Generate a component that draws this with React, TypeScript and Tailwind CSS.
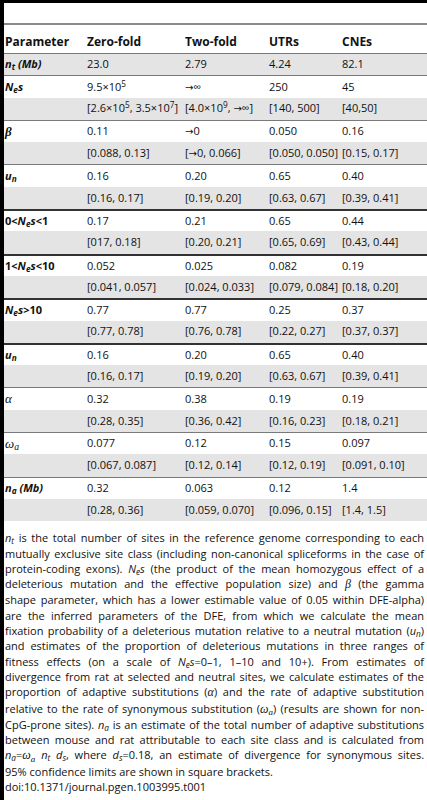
import React from "react";

const SANS = "font-['Open_Sans',sans-serif]";
const SERIF = "font-['Liberation_Serif',serif]";

const Ne = ({ bold = false }: { bold?: boolean }) => (
  <span className={bold ? "italic font-bold" : "italic"}>
    N<sub>e</sub>s
  </span>
);

type Row = {
  label: React.ReactNode;
  vals: React.ReactNode[];
  ci: React.ReactNode[] | null;
  heavy?: boolean;
};

const Sup = ({ b, e }: { b: string; e: string }) => (
  <>
    {b}×10<sup>{e}</sup>
  </>
);

const Arr = () => <span className="font-['DejaVu_Sans',sans-serif] text-[10px]">→</span>;

const rows: Row[] = [
  {
    label: (
      <span className="italic font-bold">
        n<sub>t</sub> (Mb)
      </span>
    ),
    vals: ["23.0", "2.79", "4.24", "82.1"],
    ci: null,
  },
  {
    label: <Ne bold />,
    vals: [
      <Sup b="9.5" e="5" />,
      <>
        <Arr />∞
      </>,
      "250",
      "45",
    ],
    ci: [
      <>
        [<Sup b="2.6" e="5" />, <Sup b="3.5" e="7" />]
      </>,
      <>
        [<Sup b="4.0" e="9" />, <Arr />∞]
      </>,
      "[140, 500]",
      "[40,50]",
    ],
  },
  {
    label: <span className={`${SERIF} italic font-bold text-[13px]`}>β</span>,
    vals: [
      "0.11",
      <>
        <Arr />0
      </>,
      "0.050",
      "0.16",
    ],
    ci: [
      "[0.088, 0.13]",
      <>
        [<Arr />0, 0.066]
      </>,
      "[0.050, 0.050]",
      "[0.15, 0.17]",
    ],
  },
  {
    label: (
      <span className="italic font-bold">
        u<sub>n</sub>
      </span>
    ),
    vals: ["0.16", "0.20", "0.65", "0.40"],
    ci: ["[0.16, 0.17]", "[0.19, 0.20]", "[0.63, 0.67]", "[0.39, 0.41]"],
  },
  {
    label: (
      <span className="font-bold">
        0&lt;<Ne />&lt;1
      </span>
    ),
    vals: ["0.17", "0.21", "0.65", "0.44"],
    ci: ["[017, 0.18]", "[0.20, 0.21]", "[0.65, 0.69]", "[0.43, 0.44]"],
    heavy: true,
  },
  {
    label: (
      <span className="font-bold">
        1&lt;<Ne />&lt;10
      </span>
    ),
    vals: ["0.052", "0.025", "0.082", "0.19"],
    ci: ["[0.041, 0.057]", "[0.024, 0.033]", "[0.079, 0.084]", "[0.18, 0.20]"],
    heavy: true,
  },
  {
    label: (
      <span className="font-bold">
        <Ne />
        &gt;10
      </span>
    ),
    vals: ["0.77", "0.77", "0.25", "0.37"],
    ci: ["[0.77, 0.78]", "[0.76, 0.78]", "[0.22, 0.27]", "[0.37, 0.37]"],
    heavy: true,
  },
  {
    label: (
      <span className="italic font-bold">
        u<sub>n</sub>
      </span>
    ),
    vals: ["0.16", "0.20", "0.65", "0.40"],
    ci: ["[0.16, 0.17]", "[0.19, 0.20]", "[0.63, 0.67]", "[0.39, 0.41]"],
    heavy: true,
  },
  {
    label: <span className={`${SERIF} italic text-[13px]`}>α</span>,
    vals: ["0.32", "0.38", "0.19", "0.19"],
    ci: ["[0.28, 0.35]", "[0.36, 0.42]", "[0.16, 0.23]", "[0.18, 0.21]"],
  },
  {
    label: (
      <span className={`${SERIF} italic text-[13px]`}>
        ω<sub>a</sub>
      </span>
    ),
    vals: ["0.077", "0.12", "0.15", "0.097"],
    ci: ["[0.067, 0.087]", "[0.12, 0.14]", "[0.12, 0.19]", "[0.091, 0.10]"],
  },
  {
    label: (
      <span className="italic font-bold">
        n<sub>a</sub> (Mb)
      </span>
    ),
    vals: ["0.32", "0.063", "0.12", "1.4"],
    ci: ["[0.28, 0.36]", "[0.059, 0.070]", "[0.096, 0.15]", "[1.4, 1.5]"],
  },
];

const GRID = "grid grid-cols-[82px_98px_84px_73px_1fr] items-center pl-[1px]";

const Line = ({ children, last = false }: { children: React.ReactNode; last?: boolean }) => (
  <div className={last ? "text-left" : "text-justify [text-align-last:justify]"}>{children}</div>
);

const I = ({ children }: { children: React.ReactNode }) => <span className="italic">{children}</span>;
const G = ({ children }: { children: React.ReactNode }) => (
  <span className={`${SERIF} italic text-[12px]`}>{children}</span>
);

export default function App() {
  return (
    <div className={`${SANS} bg-white text-[#111] min-h-[800px] w-[427px] border-l-4 border-black overflow-hidden`}>
      <div className="h-[3px] bg-black -ml-1 w-[427px]" />
      <div className="h-[20px]" />
      {/* header */}
      <div className={`${GRID} border-t-2 border-[#8a8a8a] h-[30px] pt-[6px] text-[12px] font-bold`}>
        <div>Parameter</div>
        <div>Zero-fold</div>
        <div>Two-fold</div>
        <div>UTRs</div>
        <div>CNEs</div>
      </div>
      <div className="text-[11px]">
        {rows.map((r, i) => (
          <React.Fragment key={i}>
            <div
              className={`${GRID} h-[22.3px] ${
                r.heavy ? "border-t-2 border-[#333]" : "border-t border-[#7a7a7a]"
              } ${r.ci === null ? "bg-[#e4e4e4]" : ""}`}
            >
              <div>{r.label}</div>
              {r.vals.map((v, j) => (
                <div key={j} className="whitespace-nowrap">
                  {v}
                </div>
              ))}
            </div>
            {r.ci && (
              <div className={`${GRID} h-[22.3px] bg-[#e4e4e4]`}>
                <div />
                {r.ci.map((v, j) => (
                  <div key={j} className="whitespace-nowrap">
                    {v}
                  </div>
                ))}
              </div>
            )}
          </React.Fragment>
        ))}
      </div>
      <div className="pl-[1px] pr-[3px] pt-[9px] text-[11px] leading-[15.3px]">
        <Line>
          <I>
            n<sub>t</sub>
          </I>{" "}
          is the total number of sites in the reference genome corresponding to each
        </Line>
        <Line>mutually exclusive site class (including non-canonical spliceforms in the case of</Line>
        <Line>
          protein-coding exons). <Ne /> (the product of the mean homozygous effect of a
        </Line>
        <Line>
          deleterious mutation and the effective population size) and <G>β</G> (the gamma
        </Line>
        <Line>shape parameter, which has a lower estimable value of 0.05 within DFE-alpha)</Line>
        <Line>are the inferred parameters of the DFE, from which we calculate the mean</Line>
        <Line>
          fixation probability of a deleterious mutation relative to a neutral mutation (
          <I>
            u<sub>n</sub>
          </I>
          )
        </Line>
        <Line>and estimates of the proportion of deleterious mutations in three ranges of</Line>
        <Line>
          fitness effects (on a scale of <Ne />=0–1, 1–10 and 10+). From estimates of
        </Line>
        <Line>divergence from rat at selected and neutral sites, we calculate estimates of the</Line>
        <Line>
          proportion of adaptive substitutions (<G>α</G>) and the rate of adaptive substitution
        </Line>
        <Line>
          relative to the rate of synonymous substitution (
          <G>
            ω<sub>a</sub>
          </G>
          ) (results are shown for non-
        </Line>
        <Line>
          CpG-prone sites).{" "}
          <I>
            n<sub>a</sub>
          </I>{" "}
          is an estimate of the total number of adaptive substitutions
        </Line>
        <Line>between mouse and rat attributable to each site class and is calculated from</Line>
        <Line>
          <I>
            n<sub>a</sub>
          </I>
          =
          <G>
            ω<sub>a</sub>
          </G>{" "}
          <I>
            n<sub>t</sub>
          </I>{" "}
          <I>
            d<sub>s</sub>
          </I>
          , where{" "}
          <I>
            d<sub>s</sub>
          </I>
          =0.18, an estimate of divergence for synonymous sites.
        </Line>
        <Line last>95% confidence limits are shown in square brackets.</Line>
        <Line last>doi:10.1371/journal.pgen.1003995.t001</Line>
      </div>
    </div>
  );
}
